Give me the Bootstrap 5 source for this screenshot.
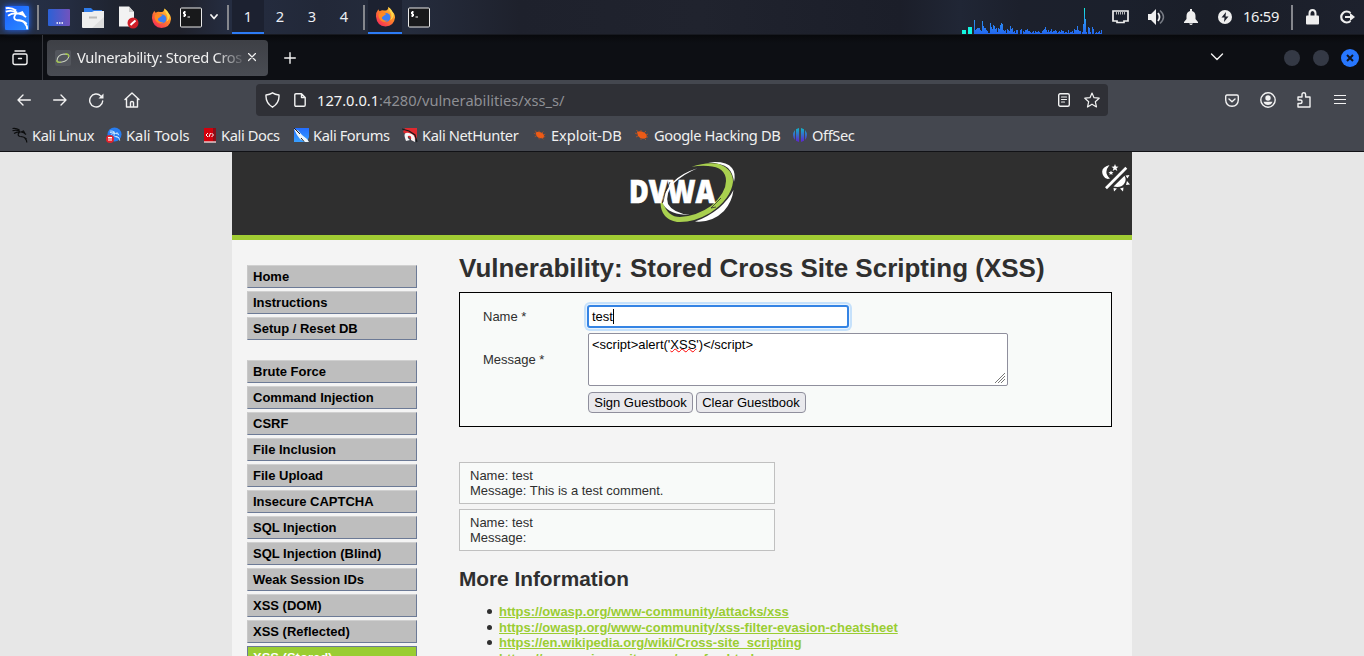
<!DOCTYPE html>
<html lang="en">
<head>
<meta charset="utf-8">
<meta name="viewport" content="width=device-width, initial-scale=1">
<title>Vulnerability: Stored Cross Site Scripting (XSS)</title>
<link href="https://cdn.jsdelivr.net/npm/bootstrap@5.3.0/dist/css/bootstrap.min.css" rel="stylesheet">
<style>
body{height:656px;overflow:hidden;background:#e7e7e7;font-family:"Noto Sans",sans-serif;font-size:15px;line-height:20px;color:#f0f0f0}
svg{display:block;flex:none}
.ln{fill:none;stroke:#f2f2f2;stroke-width:1.4;stroke-linecap:round;stroke-linejoin:round}
.ln.thin{stroke-width:1.2}
.ln.thick{stroke-width:1.8}
/* gaps between the items of a bar */
.g3{margin-left:3px}.g4{margin-left:4px}.g6{margin-left:6px}.g8{margin-left:8px}.g9{margin-left:9px}.g10{margin-left:10px}.g11{margin-left:11px}.g12{margin-left:12px}.g13{margin-left:13px}.g14{margin-left:14px}.g16{margin-left:16px}.g17{margin-left:17px}.g19{margin-left:19px}.g20{margin-left:20px}.g21{margin-left:21px}.g22{margin-left:22px}.g23{margin-left:23px}
/* desktop panel */
.panel{height:35px;background:linear-gradient(#0000 34px,#171920 34px),linear-gradient(90deg,#263149 0,#242c40 70px,#1f2430 115px,#20222c 180px,#252d41 230px,#222838 320px,#252c3d 410px,#1e212c 520px,#20232e 700px,#1b1e29 900px,#202635 960px,#1c202c 1020px,#1b202c 1120px,#1a1e28 1210px,#1d212d 1364px);padding:0 9px 0 5px}
.panel .vr-line{width:2px;height:25px;background:#85878d}
.ws{width:32px;height:34px;line-height:32px;text-align:center;font-size:14.67px;color:#eceff4;align-self:flex-start}
.on{background:#1c2130;border-bottom:2px solid #2d7cf6}
.run{width:34px;height:34px;align-self:flex-start}
.kali{width:24px;height:24px;border-radius:1px;background:linear-gradient(135deg,#1a5fff,#2d8cff);box-shadow:0 0 6px #2368ff}
.clock{width:36px;font-size:14.67px;letter-spacing:-.3px;white-space:nowrap;padding-bottom:3px}
.load{margin-left:532px}
/* browser chrome */
.tabs{height:45px;background:linear-gradient(#08090c,#0d0f14 8px)}
.view{width:43px;height:45px;border-right:1px solid #35373d}
.btab{width:221px;height:36px;border-radius:4px;background:linear-gradient(#3e4046,#494c53);font-size:14.67px}
.ttl{width:168px;letter-spacing:-.33px;padding-bottom:1px;-webkit-mask-image:linear-gradient(90deg,#000 138px,transparent 170px);mask-image:linear-gradient(90deg,#000 138px,transparent 170px)}
.tabmenu{margin-right:60px}
.wbtn{width:16px;height:16px;border-radius:50%;background:#343945}
.wclose{width:18px;height:18px;border-radius:50%;background:#2777ff;margin:0 5px 0 12px}
.tools{height:71px;background:#44474f}
.toolrow{height:40px}
.url{width:852px;height:32px;margin:0 117px 0 116px;background:#2f3036;border-radius:4px;font-size:14.67px;color:#8e8f94}
.url b{font-weight:400;color:#f4f4f4}
.star{margin:0 8px 0 14px}
.marks{height:31px;font-size:14.67px;white-space:nowrap;padding:0 0 1px 12px;letter-spacing:-.4px}
.bm{display:flex;align-items:center;gap:4px;flex:none}
.bm.wide{letter-spacing:-.08px}
.b1{width:94px}.b2{width:97px}.b3{width:90px}.b4{width:109px}.b5{width:128px}.b6{width:101px}.b7{width:158px}
.edge{height:1px;background:#111216}
/* page */
.page{width:900px;height:504px;background:#f4f4f4;font-family:"Liberation Sans",Arial,sans-serif;font-size:13px;line-height:15px;color:#2f2f2f}
.top{height:88px;background:#2f2f2f;border-bottom:5px solid #a1cc33}
.theme{right:1px;top:11px}
.side{width:170px;margin:25px 0 0 15px;gap:20px}
.grp{gap:3px}
.side a:not([href]){display:block;flex:none;height:23px;line-height:21px;padding-left:5px;font-weight:700;color:#000;text-decoration:none;background:#bebebe;border:1px solid;border-color:#d0d0d0 #6c7a96 #6c7a96 #c8c8c8}
.side a.cur:not([href]){background:#9acd32;color:#fff;border-color:#6c7a96}
.content{width:653px;margin-left:42px}
h1{font-size:26px;line-height:30px;font-weight:700;margin:13px 0 9px}
h2{font-size:20.8px;line-height:24px;font-weight:700;margin:16px 0 13px}
.vuln{height:135px;border:1px solid #000;background:#f8faf9;padding:12px 0 0 23px}
.lab{width:105px}
.lab.msg{padding-top:5px}
.fld{border:1px solid #8f8f9d;border-radius:2px;background:#fff;color:#000;padding:0 3px}
.fname{width:262px;height:23px;margin-left:-1px;border:2px solid #3584e4;border-radius:3px;box-shadow:0 0 0 1px #e8f3fd,0 0 0 3px #c6e1fb;line-height:20px;padding-left:3px}
.caret{display:inline-block;width:1px;height:15px;background:#000;vertical-align:-3px}
.fmsg{width:420px;height:53px;padding-top:3px;margin-top:5px}
.sq{text-decoration:underline wavy #f00 1px;text-underline-offset:-1px;text-decoration-skip-ink:none}
.grip{right:2px;bottom:2px}
.acts{margin:6px 0 0 105px;gap:3px}
.gbtn{width:105px;height:21px;border:1px solid #8f8f9d;border-radius:4px;background:#e9e9ed;color:#000;padding:0;font-size:13px;line-height:19px}
.gbtn.clear{width:110px}
.note{width:316px;height:42px;border:1px solid #c0c0c0;background:#f8faf9;padding:5px 10px;margin-top:5px}
.vuln + .note{margin-top:35px}
.refs{padding-left:40px;margin:0;line-height:15.6px;font-weight:700;list-style:none}
.refs li::before{content:"";display:inline-block;width:5px;height:5px;border-radius:50%;background:#2f2f2f;margin:0 7px 2px -12px}
.refs a{color:#9acd32}
</style>
</head>
<body>
<svg width="0" height="0" class="position-absolute">
<defs>
<linearGradient id="fx" x1="1" y1="0" x2=".2" y2="1"><stop offset="0" stop-color="#ffe24b"/><stop offset=".45" stop-color="#ff8a25"/><stop offset="1" stop-color="#f7275c"/></linearGradient>
<linearGradient id="dt" x1="0" x2="1"><stop offset="0" stop-color="#2b61d6"/><stop offset="1" stop-color="#7253bd"/></linearGradient>
<linearGradient id="of" x1="0" y1="0" x2="0" y2="1"><stop offset="0" stop-color="#10b6c8"/><stop offset="1" stop-color="#5d22cf"/></linearGradient>
<linearGradient id="bl" x1="0" y1="0" x2="0" y2="1"><stop offset="0" stop-color="#246dff"/><stop offset="1" stop-color="#39a0ff"/></linearGradient>
<symbol id="firefox" viewBox="0 0 22 22"><path d="M1 11Q.6 7 3.5 3.5Q4 5 5 5.500Q7 4 9.500 4.800Q14 5 14 1Q17 3 17.500 5.500Q21 8 21 12Q20 21 11 21.500Q2 21 1 11Z" fill="url(#fx)"/><circle cx="11.500" cy="12" r="4.600" fill="#3c7ef3"/><path d="M4 8Q8 6 12 8.500Q10 9.500 9 10.500Q6 12 8 14Q10 16 13.500 15Q10 18 6.500 15.500Q3 12 4 8Z" fill="#ff8b22"/><path d="M14 1Q15 5 17 8Q18 12 16 15Q20 12 19.500 8Q18 4 14 1Z" fill="#ffd84a"/></symbol>
<symbol id="term" viewBox="0 0 22 20"><rect x=".5" y=".5" width="21" height="19" rx="1" fill="#18191b" stroke="#e8e8e8"/><path d="M6 4.500H3.500V6.500H5.500V8.500H3M4.500 3.500V9.500M7.500 9.500H10" fill="none" stroke="#fff"/></symbol>
<symbol id="dragon" viewBox="0 0 16 16"><path d="M.5 1.500Q4 .8 7.500 3M.5 3.800Q4 2.500 8 4.200M2 6.500Q5 4.300 9 5Q12 5.300 14 7.500M7.500 5Q4.500 8.500 8 9.500Q12.500 9.500 13.500 12Q14.800 13 14.800 15.500M9 5L11.500 4L13 6.500M9 9.500Q12 9.500 14.500 12" fill="none" stroke="currentColor" stroke-width="1.200"/></symbol>
<symbol id="bug" viewBox="0 0 16 14"><path d="M3 4Q7 2 11 5Q14 8 12 10Q7 12 4 8Z" fill="#ee5b16"/><path d="M4 4L2.500 2M7 4L7 2M10 5L12 3M12 7L14 6M12 9L14 9M10 10L12 12M7 10L7 12M4 8L2 9M3 6L1 5" stroke="#b9501f" stroke-width=".9" fill="none"/></symbol>
</defs>
</svg>

<header class="panel d-flex align-items-center">
  <div class="kali text-white d-flex"><svg width="24" height="24"><use href="#dragon"/></svg></div>
  <i class="vr-line g8"></i>
  <svg class="g9" width="22" height="18"><rect width="22" height="17" rx="1" fill="url(#dt)"/><path d="M8.500 14h1.500m1 0h1.500m1 0h1.500" stroke="#fff" stroke-width="1.500"/></svg>
  <svg class="g12" width="22" height="22"><path d="M2 5V1H9L11 3H20V7H2Z" fill="#2e7bea"/><path d="M0 5H10L12 4H22V20Q22 21 21 21H1Q0 21 0 20Z" fill="#eee"/><path d="M22 10L10 21H22Z" fill="#ddd"/><path d="M7 10.500H15" stroke="#bbb" stroke-width="2"/></svg>
  <svg class="g14" width="21" height="23"><path d="M1 .5H11L16 6V20.500H1Z" fill="#f2f2f2"/><path d="M11 .5V6H16Z" fill="#ccc"/><circle cx="15" cy="17" r="5.500" fill="#d01e28"/><path d="M12.500 19L17.500 14.500" stroke="#fff" stroke-width="2"/></svg>
  <svg class="g12" width="21" height="22"><use href="#firefox"/></svg>
  <svg class="g8" width="22" height="21"><use href="#term"/></svg>
  <svg class="g8" width="8" height="7"><path d="M1 1L4 4.500L7 1" class="ln thick"/></svg>
  <i class="vr-line g9"></i>
  <div class="ws on g3">1</div><div class="ws">2</div><div class="ws">3</div><div class="ws">4</div>
  <i class="vr-line g3"></i>
  <div class="run on g3 d-flex align-items-center justify-content-center"><svg width="21" height="21"><use href="#firefox"/></svg></div>
  <svg class="g6" width="22" height="21"><use href="#term"/></svg>
  <svg class="load align-self-start" width="140" height="34" shape-rendering="crispEdges"><defs><linearGradient id="bar" gradientUnits="userSpaceOnUse" x1="0" y1="34" x2="0" y2="8"><stop offset="0" stop-color="#2367f0"/><stop offset=".45" stop-color="#2c8cf2"/><stop offset="1" stop-color="#13f0e0"/></linearGradient></defs><path fill="#13f5df" d="M0 30h4v4h-4zM6 27h4v7h-4z"/><path id="bars" fill="url(#bar)"/></svg>
  <svg class="g10" width="17" height="15"><path d="M1 1H16V11H12V12.500H5V11H1Z" fill="none" stroke="#eee" stroke-width="1.700"/><path d="M4.500 2V4.500M6.500 2V4.500M8.500 2V4.500M10.500 2V4.500M12.500 2V4.500" stroke="#ccc" stroke-width=".9"/></svg>
  <svg class="g19" width="17" height="17"><path d="M0 5H3L8 0V16L3 11H0Z" fill="#eee"/><path d="M10 4Q13 8 10 12" fill="none" stroke="#eee" stroke-width="1.800"/><path d="M12 1.500Q19 8 12 14.500" fill="none" stroke="#777b84" stroke-width="1.500"/></svg>
  <svg class="g19" width="14" height="17"><path d="M6 0H8V2Q11.500 3 11.500 7V10L14 13V14H0V13L2.500 10V7Q2.500 3 6 2ZM5 14.500H9Q8 16 7 16Q6 16 5 14.500Z" fill="#eee"/></svg>
  <svg class="g20" width="14" height="15"><circle cx="7" cy="7" r="7" fill="#eee"/><path d="M8 2L3.500 7.500H6.500L6 12L10.500 6.500H7.500Z" fill="#1c202c"/></svg>
  <div class="clock g11">16:59</div>
  <i class="vr-line g12"></i>
  <svg class="g13" width="13" height="17"><path d="M3.500 7V4.500Q3.500 1 6.500 1T9.500 4.500V7" fill="none" stroke="#eee" stroke-width="2"/><rect y="6.500" width="13" height="9" rx="1" fill="#eee"/></svg>
  <svg class="g21" width="15" height="15"><path d="M10.500 3A5.500 5.500 0 1 0 10.500 11" fill="none" stroke="#eee" stroke-width="2.200"/><path d="M5 6H10V3L15 7L10 11V8H5Z" fill="#eee"/></svg>
</header>

<div class="tabs d-flex align-items-center">
  <div class="view d-flex align-items-center"><svg class="g12" width="16" height="16"><path class="ln" d="M3 1H13M2.500 4H13.500Q15 4 15 5.500V12.500Q15 14.500 13 14.500H3Q1 14.500 1 12.500V5.500Q1 4 2.500 4ZM6.500 8.500H9.500"/></svg></div>
  <div class="btab g4 d-flex align-items-center">
    <svg class="g8" width="16" height="16"><rect width="16" height="16" rx="2" fill="#53565d"/><path d="M2 11Q2 5 9 4Q14 4 14 6Q13 11 7 12Q3 13 2 11Z" fill="none" stroke="#c9cfc0" stroke-width="1.100"/><path d="M2 10Q1 13 6 12M10 4Q14 3 13.500 7" fill="none" stroke="#9fc83c" stroke-width="1.200"/></svg>
    <div class="ttl g6 text-nowrap">Vulnerability: Stored Cros</div>
    <svg class="g3" width="8" height="9"><path class="ln thin" d="M.5 .5L7.500 7.500M7.500 .5L.5 7.500"/></svg>
  </div>
  <svg class="g16" width="12" height="12"><path class="ln" d="M6 .7V11.300M.7 6H11.300"/></svg>
  <svg class="tabmenu ms-auto" width="14" height="9"><path class="ln" d="M1.500 1L7 6.500L12.500 1"/></svg>
  <i class="wbtn"></i><i class="wbtn g13"></i>
  <i class="wclose d-flex align-items-center justify-content-center"><svg width="8" height="8"><path d="M1 1L7 7M7 1L1 7" stroke="#10141f" stroke-width="2"/></svg></i>
</div>

<div class="tools">
  <div class="toolrow d-flex align-items-center">
    <svg class="g17" width="14" height="12"><path class="ln" d="M13.300 6H1M6 1L1 6L6 11"/></svg>
    <svg class="g22" width="14" height="12"><path class="ln" d="M.7 6H13M8 1L13 6L8 11"/></svg>
    <svg class="g22" width="15" height="15"><path class="ln" d="M13.700 8A6.500 6.500 0 1 1 11.800 2.900L13 4"/><path d="M14.500 .5V5.500H9.500Z" fill="#f2f2f2"/></svg>
    <svg class="g20" width="16" height="16"><path class="ln" d="M1 7.500L8 1L15 7.500M2.500 6.500V15H13.500V6.500M6.500 15V10.500Q6.500 9.500 8 9.500T9.500 10.500V15"/></svg>
    <div class="url d-flex align-items-center">
      <svg class="g9" width="15" height="16"><path class="ln" d="M7.500 .8Q10 2.500 14 3Q14.500 11 7.500 15.200Q.5 11 1 3Q5 2.500 7.500 .8Z"/></svg>
      <svg class="g14" width="12" height="14"><path class="ln" d="M2 .8H7.500L11.200 4.500V12Q11.200 13.200 10 13.200H2Q.8 13.200 .8 12V2Q.8 .8 2 .8ZM7.500 1V4.500H11"/></svg>
      <div class="g11 text-nowrap"><b>127.0.0.1</b>:4280/vulnerabilities/xss_s/</div>
      <svg class="ms-auto" width="12" height="14"><rect class="ln" x=".7" y=".7" width="10.600" height="12.600" rx="1.500"/><path class="ln thin" d="M3.500 4H8.500M3.500 6.500H8.500M3.500 9H6.500"/></svg>
      <svg class="star" width="16" height="16"><path class="ln thin" d="M8 1L10 5.700L15.200 6.200L11.300 9.700L12.500 15L8 12.200L3.500 15L4.700 9.700L.8 6.200L6 5.700Z"/></svg>
    </div>
    <svg width="14" height="13"><path class="ln" d="M2 1H12Q13.300 1 13.300 2.500V6Q13 12 7 12.300Q1 12 .7 6V2.500Q.7 1 2 1ZM4 5L7 7.800L10 5"/></svg>
    <svg class="g21" width="16" height="16"><circle class="ln" cx="8" cy="8" r="7.200"/><circle cx="8" cy="6" r="2.700" fill="#f2f2f2"/><path d="M3.500 9.800H12.500Q11.500 13 8 13T3.500 9.800Z" fill="#f2f2f2"/></svg>
    <svg class="g21" width="14" height="16"><path class="ln" d="M1 5H5V2.500Q5 .8 6.800 .8T8.600 2.500V5H13V15H1V11.500H3Q5 11.500 5 9.700T3 8H1Z"/></svg>
    <svg class="g23" width="12" height="12"><path class="ln thin" d="M.5 1.500H11.500M.5 5.500H11.500M.5 9.500H11.500"/></svg>
  </div>
  <nav class="marks d-flex align-items-center">
    <div class="bm b1"><svg width="16" height="16" color="#0c0d0e"><use href="#dragon"/></svg><span>Kali Linux</span></div>
    <div class="bm wide b2"><svg width="16" height="16" color="#d9f0ff"><circle cx="8.500" cy="7.500" r="7" fill="#287df0"/><use href="#dragon" x="3" y="3" width="12" height="11"/><circle cx="4" cy="12" r="4" fill="#e2222b"/><path d="M2 10.500H6M3 10.500V14M5 10.500V14" stroke="#fff"/></svg><span>Kali Tools</span></div>
    <div class="bm b3 ms-n1"><svg width="14" height="16"><path d="M1 1H10V15H1Z" fill="#d5000c"/><path d="M10 1H13V15H10Z" fill="#8b0f18"/><path d="M1 15H13" stroke="#e6c9ca" stroke-width="1.500"/><path d="M5 6L3 8L5 10M6 10L7.500 6M8.500 6L10.500 8L8.500 10" fill="none" stroke="#fff"/></svg><span>Kali Docs</span></div>
    <div class="bm b4"><svg width="16" height="16"><path d="M1 1H16V10L14 15H1Z" fill="url(#bl)"/><path d="M1 2L5 3.500L9 8L14 12L16 15H12L7 12L4 8Z" fill="#eef5fb"/><path d="M1 1L7 7M8 11L11 14.500" stroke="#222"/></svg><span>Kali Forums</span></div>
    <div class="bm b5"><svg width="16" height="16"><path d="M3 1H15V11L11 14L1 5Z" fill="#e0292f"/><path d="M3 11Q1 5 7 6Q14 7 13 15L9 13Q10 8 6 9Q5 11 8 13L4 14Z" fill="#f5f5f5"/><path d="M0 2L7 4L13 8L15 15" fill="none" stroke="#191919" stroke-width="1.200"/></svg><span>Kali NetHunter</span></div>
    <div class="bm wide b6 g3"><svg width="14" height="14"><use href="#bug"/></svg><span>Exploit-DB</span></div>
    <div class="bm b7"><svg width="16" height="14"><use href="#bug"/></svg><span>Google Hacking DB</span></div>
    <div class="bm"><svg width="16" height="16"><path d="M3 3Q-1 8 3 13ZM4 2.300L7 1V15L4 13.700ZM9 1L12 2.300V13.700L9 15ZM13 3Q17 8 13 13Z" fill="url(#of)"/></svg><span>OffSec</span></div>
  </nav>
</div>
<div class="edge"></div>

<main class="page mx-auto overflow-hidden">
  <div class="top position-relative d-flex justify-content-center">
    <svg class="mt-2" width="108" height="64" viewBox="0 0 108 64">
      <path d="M80 2.500Q98 .5 104 8Q108 13 106 22Q105 13 100 8Q94 3 80 2.500Z" fill="#fff"/>
      <path d="M105.500 30Q104 42 96 51Q84 63 67 61.500Q80 57 91 48Q101 39 105.500 30Z" fill="#fff"/>
      <path d="M63.500 6.700Q79 1.500 91 4Q105 9 105 22Q103 39 82 53Q65 63 49 62Q33 59 32.500 43L35 43Q40 57 52 57Q69 56 83 46Q98 33 98 21Q98 7 80 6Q72 5.500 63.500 6.700Z" fill="#a9d04f"/>
      <path d="M69.500 8.300Q54 13 45 22Q34 34 35 44Q41 55 62 55Q45 53 40 44Q37 33 46 23Q56 14 69.500 8.300Z" fill="#fff"/>
      <text x="1" y="43.300" font-family="Open Sans, sans-serif" font-weight="800" font-size="32" textLength="86" lengthAdjust="spacingAndGlyphs" fill="#fff" stroke="#fff" stroke-width=".7">DVWA</text>
      <path d="M42 22Q36 32 35 42M93 38L83 48L88 47" fill="none" stroke="#2f2f2f" stroke-width=".8"/>
    </svg>
    <svg class="theme position-absolute" width="29" height="29" viewBox="0 0 29 29"><path d="M7.500 2Q-3 5 1.500 13Q3.500 17 8 15.500Q1 10 7.500 2Z" fill="#fff"/><path d="M13 1L14 3.600L16.500 3.700L14.500 5.300L15.300 8L13 6.500L10.700 8L11.500 5.300L9.500 3.700L12 3.600ZM9 7.500L9.700 9L11.500 9.200L10.200 10.300L10.500 12L9 11.100L7.500 12L7.800 10.300L6.500 9.200L8.300 9Z" fill="#fff"/><path d="M4 25.300L24.300 4.700" stroke="#fff" stroke-width="2.700"/><path d="M11.500 23.500L22.500 12.800Q25 17 22 21T11.500 23.500ZM23.500 12.500L27.500 12L25.500 15.500ZM25 18L28 21.500L24 22ZM18 25.500L21.500 24.500L21 28.500ZM11.500 25L15 25.500L12 28.500Z" fill="#fff"/></svg>
  </div>
  <div class="d-flex align-items-start">
    <nav class="side d-flex flex-column">
      <div class="grp d-flex flex-column"><a>Home</a><a>Instructions</a><a>Setup / Reset DB</a></div>
      <div class="grp d-flex flex-column"><a>Brute Force</a><a>Command Injection</a><a>CSRF</a><a>File Inclusion</a><a>File Upload</a><a>Insecure CAPTCHA</a><a>SQL Injection</a><a>SQL Injection (Blind)</a><a>Weak Session IDs</a><a>XSS (DOM)</a><a>XSS (Reflected)</a><a class="cur">XSS (Stored)</a></div>
    </nav>
    <section class="content">
      <h1>Vulnerability: Stored Cross Site Scripting (XSS)</h1>
      <div class="vuln">
        <div class="d-flex align-items-center"><span class="lab">Name *</span><div class="fld fname">test<i class="caret"></i></div></div>
        <div class="d-flex align-items-center"><span class="lab msg">Message *</span><div class="fld fmsg position-relative">&lt;script&gt;alert('<span class="sq">XSS</span>')&lt;/script&gt;<svg class="grip position-absolute" width="10" height="10"><path d="M0 10L10 0M3 10L10 3M6 10L10 6" stroke="#777"/></svg></div></div>
        <div class="acts d-flex"><button class="gbtn">Sign Guestbook</button><button class="gbtn clear">Clear Guestbook</button></div>
      </div>
      <div class="note">Name: test<br>Message: This is a test comment.</div>
      <div class="note">Name: test<br>Message:</div>
      <h2>More Information</h2>
      <ul class="refs"><li><a href="#">https://owasp.org/www-community/attacks/xss</a></li><li><a href="#">https://owasp.org/www-community/xss-filter-evasion-cheatsheet</a></li><li><a href="#">https://en.wikipedia.org/wiki/Cross-site_scripting</a></li><li><a href="#">https://www.cgisecurity.com/xss-faq.html</a></li></ul>
    </section>
  </div>
</main>
<script src="https://cdn.jsdelivr.net/npm/bootstrap@5.3.0/dist/js/bootstrap.bundle.min.js"></script>
<script>
/* network load history, one pixel per sample */
const load=[14,4,5,6,6,6,4,3,13,8,6,6,4,3,1,1,11,7,5,9,8,5,6,2,6,5,9,11,10,4,3,4,1,5,4,3,8,5,6,2,3,1,4,4,0,0,4,5,0,3,2,4,4,5,3,3,2,1,2,3,1,3,2,2,3,2,1,1,3,4,5,7,4,2,4,2,3,5,2,3,3,4,3,1,2,3,2,4,3,3,1,2,2,1,4,1,2,2,3,1,5,4,4,8,4,3,3,0,2,10,26,15,2,0,7,6,2,0,7,5,0,1,2,1,2,3,1,4];
document.getElementById('bars').setAttribute('d',load.map((h,i)=>`M${12+i} 34v-${h}h1v${h}z`).join(''));
</script>
</body>
</html>
